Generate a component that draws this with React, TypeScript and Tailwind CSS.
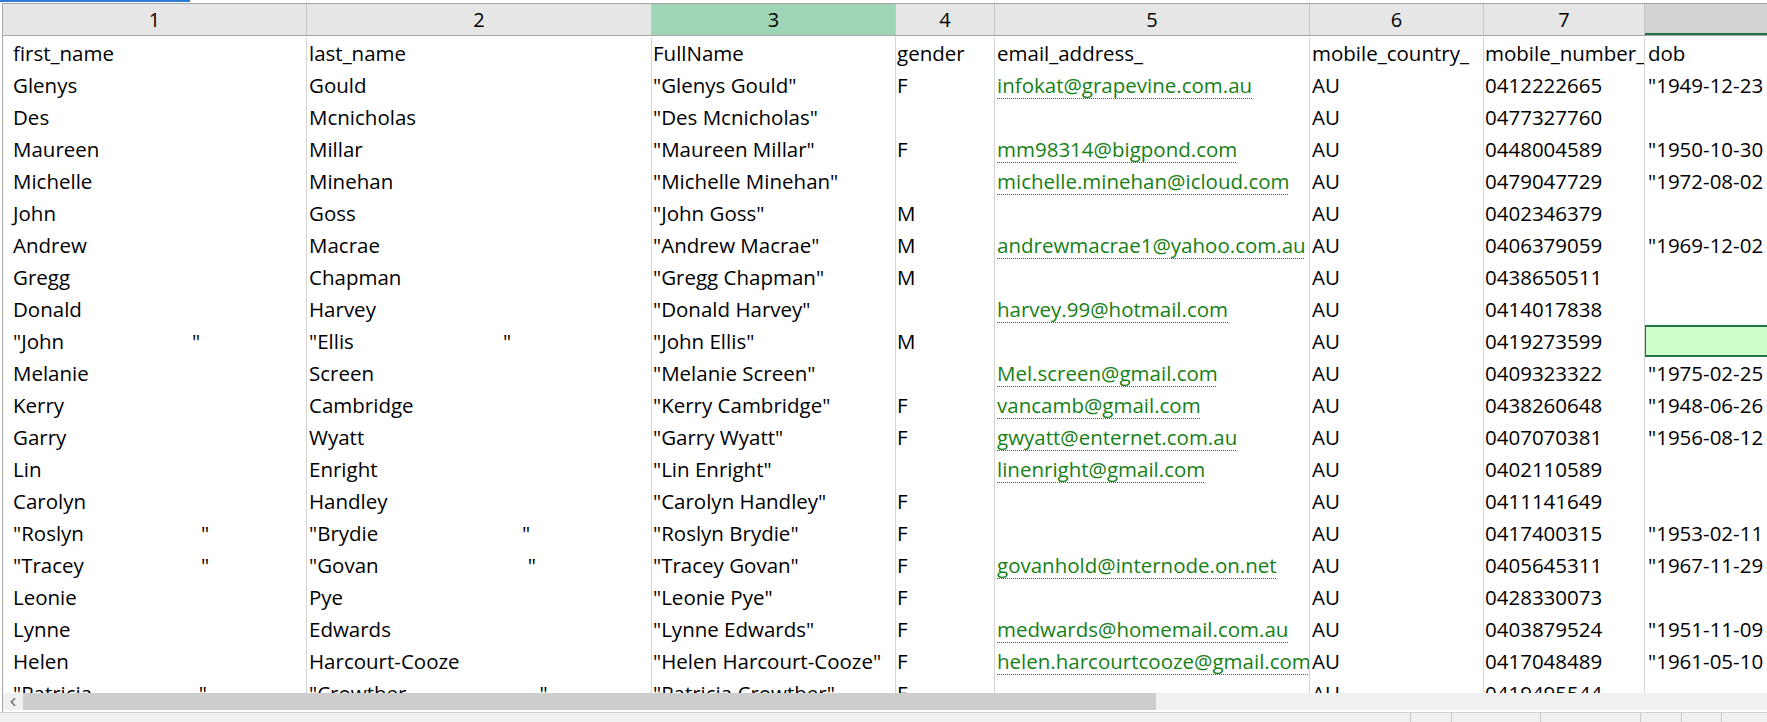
import { ChevronLeft } from "lucide-react";

type Col = {
  key: string;
  width: string;
  pad: string;
};

const columns: Col[] = [
  { key: "1", width: "w-[304px]", pad: "pl-[10px]" },
  { key: "2", width: "w-[345px]", pad: "pl-[2px]" },
  { key: "3", width: "w-[244px]", pad: "pl-[1px]" },
  { key: "4", width: "w-[99px]", pad: "pl-[1px]" },
  { key: "5", width: "w-[315px]", pad: "pl-[2px]" },
  { key: "6", width: "w-[174px]", pad: "pl-[2px]" },
  { key: "7", width: "w-[161px]", pad: "pl-[1px]" },
  { key: "8", width: "w-[160px]", pad: "pl-[3px]" },
];

const padded = (s: string, n: number) => `"${s}`.padEnd(n) + '"';

const rows: string[][] = [
  ["first_name", "last_name", "FullName", "gender", "email_address_", "mobile_country_", "mobile_number_", "dob"],
  ["Glenys", "Gould", '"Glenys Gould"', "F", "infokat@grapevine.com.au", "AU", "0412222665", '"1949-12-23'],
  ["Des", "Mcnicholas", '"Des Mcnicholas"', "", "", "AU", "0477327760", ""],
  ["Maureen", "Millar", '"Maureen Millar"', "F", "mm98314@bigpond.com", "AU", "0448004589", '"1950-10-30'],
  ["Michelle", "Minehan", '"Michelle Minehan"', "", "michelle.minehan@icloud.com", "AU", "0479047729", '"1972-08-02'],
  ["John", "Goss", '"John Goss"', "M", "", "AU", "0402346379", ""],
  ["Andrew", "Macrae", '"Andrew Macrae"', "M", "andrewmacrae1@yahoo.com.au", "AU", "0406379059", '"1969-12-02'],
  ["Gregg", "Chapman", '"Gregg Chapman"', "M", "", "AU", "0438650511", ""],
  ["Donald", "Harvey", '"Donald Harvey"', "", "harvey.99@hotmail.com", "AU", "0414017838", ""],
  [padded("John", 29), padded("Ellis", 34), '"John Ellis"', "M", "", "AU", "0419273599", ""],
  ["Melanie", "Screen", '"Melanie Screen"', "", "Mel.screen@gmail.com", "AU", "0409323322", '"1975-02-25'],
  ["Kerry", "Cambridge", '"Kerry Cambridge"', "F", "vancamb@gmail.com", "AU", "0438260648", '"1948-06-26'],
  ["Garry", "Wyatt", '"Garry Wyatt"', "F", "gwyatt@enternet.com.au", "AU", "0407070381", '"1956-08-12'],
  ["Lin", "Enright", '"Lin Enright"', "", "linenright@gmail.com", "AU", "0402110589", ""],
  ["Carolyn", "Handley", '"Carolyn Handley"', "F", "", "AU", "0411141649", ""],
  [padded("Roslyn", 29), padded("Brydie", 34), '"Roslyn Brydie"', "F", "", "AU", "0417400315", '"1953-02-11'],
  [padded("Tracey", 29), padded("Govan", 34), '"Tracey Govan"', "F", "govanhold@internode.on.net", "AU", "0405645311", '"1967-11-29'],
  ["Leonie", "Pye", '"Leonie Pye"', "F", "", "AU", "0428330073", ""],
  ["Lynne", "Edwards", '"Lynne Edwards"', "F", "medwards@homemail.com.au", "AU", "0403879524", '"1951-11-09'],
  ["Helen", "Harcourt-Cooze", '"Helen Harcourt-Cooze"', "F", "helen.harcourtcooze@gmail.com", "AU", "0417048489", '"1961-05-10'],
  [padded("Patricia", 29), padded("Crowther", 34), '"Patricia Crowther"', "F", "", "AU", "0419495544", ""],
];

// row 9, dob column is the active cell
const activeRow = 9;
const activeCol = 7;

function HeaderCell({ col, index }: { col: Col; index: number }) {
  let bg = "bg-[#e6e6e6]";
  if (index === 2) bg = "bg-[#9fd5b7]";
  if (index === activeCol) bg = "bg-[#d2d2d2] shadow-[inset_0_-2px_0_#217346]";
  return (
    <div
      className={`${col.width} ${bg} shrink-0 h-full flex items-center justify-center border-r border-[#c6c6c6] text-[20px] text-black`}
    >
      {index === activeCol ? "" : col.key}
    </div>
  );
}

function Cell({ col, value, isEmail, active }: { col: Col; value: string; isEmail: boolean; active: boolean }) {
  return (
    <div
      className={`${col.width} ${col.pad} relative shrink-0 h-[32px] leading-[32px] whitespace-pre overflow-hidden border-r border-[#d4d4d4] ${
        active ? "bg-[#ccffcc]" : ""
      }`}
    >
      {isEmail && value ? (
        <span className="text-[#178017] underline decoration-dotted decoration-[#178017] decoration-1 underline-offset-[5px]">
          {value}
        </span>
      ) : (
        <span className="text-black">{value}</span>
      )}
      {active && <div className="absolute -left-[1px] top-0 bottom-0 right-0 border-2 border-[#217346]" />}
    </div>
  );
}

export default function App() {
  return (
    <div className="w-[1767px] h-[722px] bg-white overflow-hidden flex flex-col font-['Open_Sans',sans-serif] text-[20.5px]">
      {/* Window tab strip */}
      <div className="h-[3px] shrink-0 bg-white">
        <div className="w-[190px] h-[2px] bg-[#2b7bd4]" />
      </div>

      <div className="flex-1 min-h-0 flex flex-col ml-[2px] border-l border-[#a6a6a6]">
        {/* Column numbers */}
        <div className="h-[33px] shrink-0 flex border-t border-b border-[#a6a6a6] bg-[#e6e6e6]">
          {columns.map((c, i) => (
            <HeaderCell key={c.key} col={c} index={i} />
          ))}
        </div>

        {/* Data */}
        <div className="flex-1 min-h-0 overflow-hidden pt-[1px]">
          {rows.map((r, ri) => (
            <div key={ri} className="flex">
              {columns.map((c, ci) => (
                <Cell
                  key={c.key}
                  col={c}
                  value={r[ci]}
                  isEmail={ci === 4 && ri > 0}
                  active={ri === activeRow && ci === activeCol}
                />
              ))}
            </div>
          ))}
        </div>

        {/* Horizontal scrollbar */}
        <div className="h-[17px] shrink-0 flex bg-[#f0f0f0]">
          <div className="w-[20px] shrink-0 flex items-center justify-center">
            <ChevronLeft className="w-[14px] h-[14px] text-[#606060]" strokeWidth={2} />
          </div>
          <div className="w-[1133px] shrink-0 bg-[#cdcdcd]" />
          <div className="flex-1" />
        </div>
        <div className="h-[2px] shrink-0 bg-white" />
      </div>

      {/* Status bar */}
      <div className="h-[10px] shrink-0 flex bg-[#f0f0f0] border-t border-[#d0d0d0]">
        <div className="flex-1" />
        <div className="w-[41px] border-l border-[#c8c8c8]" />
        <div className="w-[89px] border-l border-[#c8c8c8]" />
        <div className="w-[100px] border-l border-[#c8c8c8]" />
        <div className="w-[41px] border-l border-[#c8c8c8]" />
        <div className="w-[40px] border-l border-[#c8c8c8]" />
        <div className="w-[46px] border-l border-[#c8c8c8]" />
      </div>
    </div>
  );
}
